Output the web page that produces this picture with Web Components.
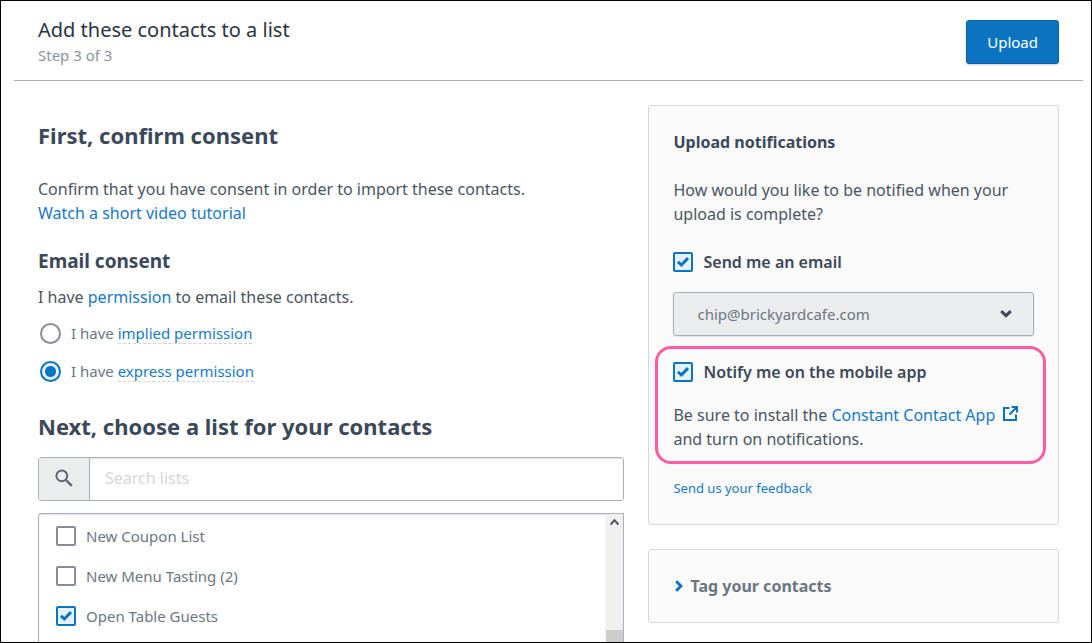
<!DOCTYPE html>
<html lang="en">
<head>
<meta charset="UTF-8">
<meta name="viewport" content="width=device-width, initial-scale=1.0">
<title>Add these contacts to a list</title>
<style>
    body {
        margin: 0;
        font-family: 'Noto Sans', 'Open Sans', sans-serif;
        font-size: 16px;
        line-height: 24px;
        --text-dark: #3b4859;
        --text-body: #4a5563;
        --text-muted: #6b7683;
        --link: #1779c4;
        --accent: #0b74c0;
        --accent-soft: #e6f1fa;
        --border: #a9b0b8;
        --panel-border: #d5d8dc;
        --panel-bg: #fafafa;
        --field-bg: #ebecee;
        --pink: #ff5ca3;
    }

    contacts-page {
        color: var(--text-body);
    }
</style>
</head>
<body>
<contacts-page></contacts-page>

<script>
class PageHeader extends HTMLElement {
    constructor(){
        super();
        this.attachShadow({ mode: 'open' });
        this.render();
    }

    render(){
        this.shadowRoot.innerHTML = /*html*/`
        <style>
            :host {
                display: block;
                margin: 0 8px 0 13px;
                border-bottom: 1px solid var(--border);
            }

            header {
                display: flex;
                justify-content: space-between;
                align-items: flex-start;
                padding: 16px 24px 13px;
            }

            h1 {
                margin: 0;
                font-size: 20px;
                font-weight: 400;
                line-height: 26px;
                color: #2a3442;
            }

            p {
                margin: 0;
                font-size: 15px;
                color: #8d949e;
            }

            button {
                height: 44px;
                margin-top: 3px;
                padding: 0 20px;
                border: 1px solid #0a62a5;
                border-radius: 3px;
                background: var(--accent);
                box-shadow: 0 1px 2px rgba(0, 0, 0, 0.2);
                color: #ffffff;
                font-family: inherit;
                font-size: 15px;
            }
        </style>
        <header>
            <div>
                <h1><slot></slot></h1>
                <p><slot name="step"></slot></p>
            </div>
            <button type="button">Upload</button>
        </header>
        `;
    }
}

class CheckOption extends HTMLElement {
    constructor(){
        super();
        this.attachShadow({ mode: 'open' });
        this.render();
    }

    render(){
        const checked = this.hasAttribute('checked') ? 'checked' : '';
        this.shadowRoot.innerHTML = /*html*/`
        <style>
            :host {
                display: block;
                font-size: 15px;
                color: var(--text-muted);
            }

            :host([strong]) {
                font-size: 16px;
                font-weight: 600;
                color: var(--text-dark);
            }

            label {
                display: flex;
                align-items: center;
                gap: 10px;
            }

            .box {
                display: grid;
                flex: none;
            }

            .box > * {
                grid-area: 1 / 1;
            }

            input {
                appearance: none;
                box-sizing: border-box;
                width: 20px;
                height: 20px;
                margin: 0;
                border: 2px solid #868e99;
                border-radius: 2px;
                background: #ffffff;
            }

            input:checked {
                border-color: var(--accent);
                background: var(--accent-soft);
            }

            svg {
                display: none;
                place-self: center;
                fill: none;
                stroke: var(--accent);
                stroke-width: 3;
                pointer-events: none;
            }

            input:checked + svg {
                display: block;
            }
        </style>
        <label>
            <span class="box">
                <input type="checkbox" ${checked}>
                <svg width="12" height="12" viewBox="0 0 12 12" aria-hidden="true"><path d="M1 5.800l3.400 3.200L11 2"/></svg>
            </span>
            <span><slot></slot></span>
        </label>
        `;
    }
}

class ConsentOptions extends HTMLElement {
    constructor(){
        super();
        this.attachShadow({ mode: 'open' });
        this.render();
    }

    render(){
        this.shadowRoot.innerHTML = /*html*/`
        <style>
            :host {
                display: grid;
                gap: 14px;
                font-size: 15px;
                color: var(--text-muted);
            }

            label {
                display: flex;
                align-items: center;
                gap: 10px;
            }

            input {
                appearance: none;
                box-sizing: border-box;
                width: 21px;
                height: 21px;
                margin: 0 0 0 2px;
                border: 2px solid #868e99;
                border-radius: 50%;
                background: #ffffff;
            }

            input:checked {
                border-color: var(--accent);
                background: radial-gradient(circle, var(--accent) 5px, var(--accent-soft) 6px);
            }

            a {
                color: var(--link);
                text-decoration: none;
                border-bottom: 1px dashed #cfd3d8;
            }
        </style>
        <label>
            <input type="radio" name="consent" value="implied">
            <span>I have <a href="#implied">implied permission</a></span>
        </label>
        <label>
            <input type="radio" name="consent" value="express" checked>
            <span>I have <a href="#express">express permission</a></span>
        </label>
        `;
    }
}

class ListSearch extends HTMLElement {
    constructor(){
        super();
        this.attachShadow({ mode: 'open' });
        this.render();
    }

    render(){
        this.shadowRoot.innerHTML = /*html*/`
        <style>
            :host {
                display: flex;
                height: 42px;
                border: 1px solid var(--border);
                border-radius: 3px;
                overflow: hidden;
            }

            label {
                display: grid;
                place-items: center;
                width: 50px;
                padding-bottom: 2px;
                border-right: 1px solid var(--border);
                background: var(--field-bg);
            }

            svg {
                fill: none;
                stroke: #5d6774;
                stroke-width: 2;
            }

            input {
                flex: 1;
                min-width: 0;
                padding: 0 15px 2px;
                border: none;
                outline: none;
                background: #ffffff;
                box-shadow: inset 0 1px 2px rgba(0, 0, 0, 0.12);
                color: var(--text-body);
                font-family: inherit;
                font-size: 16px;
            }

            input::placeholder {
                color: #d3d6da;
            }
        </style>
        <label for="search">
            <svg width="18" height="18" viewBox="0 0 18 18" role="img" aria-label="Search"><circle cx="6.8" cy="6.8" r="5.4"/><path d="M10.8 10.8l6 6" stroke-width="2.4"/></svg>
        </label>
        <input type="text" id="search" placeholder="Search lists">
        `;
    }
}

class ContactLists extends HTMLElement {
    constructor(){
        super();
        this.attachShadow({ mode: 'open' });
        this.render();
    }

    render(){
        this.shadowRoot.innerHTML = /*html*/`
        <style>
            :host {
                display: flex;
                min-height: 240px;
                border: 1px solid var(--border);
                border-radius: 3px 0 0 3px;
                background: #ffffff;
            }

            .lists {
                flex: 1;
                display: flex;
                flex-direction: column;
                gap: 16px;
                padding: 10px 17px;
                box-shadow: inset 0 1px 2px rgba(0, 0, 0, 0.12);
            }

            .scroll {
                display: flex;
                flex-direction: column;
                width: 17px;
                background: #f0f0f0;
            }

            .scroll svg {
                margin: 4px auto 0;
                fill: none;
                stroke: #505050;
                stroke-width: 2;
            }

            .thumb {
                flex: 1;
                margin-top: 104px;
                background: #cdcdcd;
            }
        </style>
        <div class="lists"><slot></slot></div>
        <div class="scroll" aria-hidden="true">
            <svg width="9" height="8" viewBox="0 0 9 8"><path d="M.6 6.6L4.5 2.2l3.9 4.4"/></svg>
            <div class="thumb"></div>
        </div>
        `;
    }
}

class SidePanel extends HTMLElement {
    constructor(){
        super();
        this.attachShadow({ mode: 'open' });
        this.shadowRoot.innerHTML = /*html*/`
        <style>
            :host {
                display: block;
                padding: 24px;
                border: 1px solid var(--panel-border);
                border-radius: 3px;
                background: var(--panel-bg);
            }
        </style>
        <slot></slot>
        `;
    }
}

class EmailSelect extends HTMLElement {
    constructor(){
        super();
        this.attachShadow({ mode: 'open' });
        this.render();
    }

    render(){
        this.shadowRoot.innerHTML = /*html*/`
        <style>
            :host {
                display: grid;
                align-items: center;
            }

            select, svg {
                grid-area: 1 / 1;
            }

            select {
                appearance: none;
                width: 100%;
                height: 44px;
                padding: 0 23px;
                border: 1px solid var(--border);
                border-radius: 3px;
                background: var(--field-bg);
                box-shadow: 0 1px 2px rgba(0, 0, 0, 0.1);
                color: var(--text-muted);
                font-family: inherit;
                font-size: 15px;
            }

            svg {
                justify-self: end;
                margin-right: 22px;
                fill: none;
                stroke: var(--text-dark);
                stroke-width: 3;
                pointer-events: none;
            }
        </style>
        <select aria-label="Notification email">
            <option>chip@brickyardcafe.com</option>
        </select>
        <svg width="12" height="8" viewBox="0 0 12 8" aria-hidden="true"><path d="M1.2 1.2L6 5.6l4.8-4.4"/></svg>
        `;
    }
}

class UploadNotifications extends HTMLElement {
    constructor(){
        super();
        this.attachShadow({ mode: 'open' });
        this.render();
    }

    render(){
        this.shadowRoot.innerHTML = /*html*/`
        <style>
            :host {
                display: block;
            }

            h3 {
                margin: 0 0 24px;
                font-size: 16px;
                font-weight: 700;
                color: var(--text-dark);
            }

            p {
                margin: 0;
            }

            a {
                color: var(--link);
                text-decoration: none;
            }

            check-option {
                margin-top: 24px;
            }

            email-select {
                margin-top: 18px;
            }

            .highlight {
                margin: 10px -12px 12px -18px;
                padding: 11px 0 10px 15px;
                border: 3px solid var(--pink);
                border-radius: 16px;
            }

            .highlight check-option {
                margin: 0 0 19px;
            }

            .highlight svg {
                margin-left: 4px;
                fill: none;
                stroke: var(--accent);
                stroke-width: 2;
            }

            .feedback {
                font-size: 13px;
            }
        </style>
        <side-panel>
            <h3>Upload notifications</h3>
            <p>How would you like to be notified when your<br>upload is complete?</p>
            <check-option strong checked>Send me an email</check-option>
            <email-select></email-select>
            <div class="highlight">
                <check-option strong checked>Notify me on the mobile app</check-option>
                <p>Be sure to install the <a href="#app">Constant Contact App <svg width="15" height="15" viewBox="0 0 15 15" aria-hidden="true"><path d="M6.5 2H1v12h12V8.500M8.500 1H14v5.500M14 1L6.500 8.500"/></svg></a><br>and turn on notifications.</p>
            </div>
            <p class="feedback"><a href="#feedback">Send us your feedback</a></p>
        </side-panel>
        `;
    }
}

class TagContacts extends HTMLElement {
    constructor(){
        super();
        this.attachShadow({ mode: 'open' });
        this.render();
    }

    render(){
        this.shadowRoot.innerHTML = /*html*/`
        <style>
            :host {
                display: block;
            }

            button {
                display: flex;
                align-items: center;
                gap: 7px;
                height: 24px;
                padding: 0 0 0 2px;
                border: none;
                background: none;
                color: var(--text-muted);
                font-family: inherit;
                font-size: 16px;
                font-weight: 700;
            }

            svg {
                fill: none;
                stroke: var(--accent);
                stroke-width: 3;
            }
        </style>
        <side-panel>
            <button type="button" aria-expanded="false">
                <svg width="8" height="12" viewBox="0 0 8 12" aria-hidden="true"><path d="M1.2 1.2L6 6l-4.8 4.8"/></svg>
                Tag your contacts
            </button>
        </side-panel>
        `;
    }
}

class ContactsPage extends HTMLElement {
    constructor(){
        super();
        this.attachShadow({ mode: 'open' });
        this.render();
    }

    render(){
        this.shadowRoot.innerHTML = /*html*/`
        <style>
            :host {
                display: block;
                box-sizing: border-box;
                height: 100vh;
                border: 1px solid #000000;
                background: #ffffff;
                overflow: hidden;
            }

            main {
                display: grid;
                grid-template-columns: minmax(0, 10fr) minmax(0, 7fr);
                align-items: start;
                gap: 24px;
                padding: 24px 32px 24px 37px;
            }

            .consent {
                padding-top: 15px;
            }

            h2 {
                margin: 0 0 27px;
                font-size: 22px;
                font-weight: 700;
                line-height: 30px;
                color: var(--text-dark);
            }

            h2.next {
                margin: 28px 0 16px;
            }

            h3 {
                margin: 24px 0 12px;
                font-size: 19px;
                font-weight: 700;
                color: var(--text-dark);
            }

            p {
                margin: 0;
            }

            a {
                color: var(--link);
                text-decoration: none;
            }

            consent-options, contact-lists {
                margin-top: 12px;
            }

            aside {
                display: grid;
                gap: 24px;
            }
        </style>
        <page-header>Add these contacts to a list<span slot="step">Step 3 of 3</span></page-header>
        <main>
            <section class="consent">
                <h2>First, confirm consent</h2>
                <p>Confirm that you have consent in order to import these contacts.<br><a href="#tutorial">Watch a short video tutorial</a></p>
                <h3>Email consent</h3>
                <p>I have <a href="#permission">permission</a> to email these contacts.</p>
                <consent-options></consent-options>
                <h2 class="next">Next, choose a list for your contacts</h2>
                <list-search></list-search>
                <contact-lists>
                    <check-option>New Coupon List</check-option>
                    <check-option>New Menu Tasting (2)</check-option>
                    <check-option checked>Open Table Guests</check-option>
                </contact-lists>
            </section>
            <aside>
                <upload-notifications></upload-notifications>
                <tag-contacts></tag-contacts>
            </aside>
        </main>
        `;
    }
}

customElements.define("page-header", PageHeader)
customElements.define("check-option", CheckOption)
customElements.define("consent-options", ConsentOptions)
customElements.define("list-search", ListSearch)
customElements.define("contact-lists", ContactLists)
customElements.define("side-panel", SidePanel)
customElements.define("email-select", EmailSelect)
customElements.define("upload-notifications", UploadNotifications)
customElements.define("tag-contacts", TagContacts)
customElements.define("contacts-page", ContactsPage)
</script>
</body>
</html>
